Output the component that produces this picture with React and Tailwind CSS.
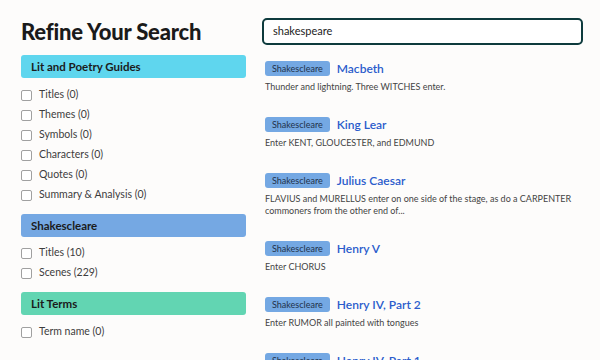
import React from "react";

const font = { fontFamily: "Lato, 'Noto Sans', sans-serif" };

function Check({ label }) {
  return (
    <div className="flex h-[20px] items-center gap-[7px]">
      <span className="block h-[11px] w-[11px] rounded-[2px] border border-[#a0a0a0] bg-white" />
      <span className="text-[10.5px] text-[#3d3d3d]">{label}</span>
    </div>
  );
}

function Bar({ color, children }) {
  return (
    <div className={`flex h-[23px] items-center rounded-[3px] pl-[10px] text-[11.5px] font-bold text-[#1b1b1b] ${color}`}>
      {children}
    </div>
  );
}

function Result({ title, snippet }) {
  return (
    <div className="mb-[24px]">
      <div className="flex h-[15px] items-center">
        <span className="flex h-[15px] items-center rounded-[3px] bg-[#74a8e3] px-[7px] text-[9px] text-[#22324a]">
          Shakescleare
        </span>
        <span className="ml-[7px] text-[12px] font-semibold leading-[15px] text-[#2b5ccc]">{title}</span>
      </div>
      <p className="mt-[5px] text-[9px] leading-[12px] text-[#444]">{snippet}</p>
    </div>
  );
}

export default function App() {
  return (
    <div className="flex h-[360px] w-[600px] overflow-hidden bg-[#fdfcfb] pl-[21px]" style={font}>
      <div className="w-[225px] shrink-0">
        <h1 className="mt-[18px] text-[22px] font-black leading-[28px] tracking-[-0.2px] text-[#1a1a1a]">Refine Your Search</h1>
        <div className="mt-[9px]">
          <Bar color="bg-[#5fd6ee]">Lit and Poetry Guides</Bar>
        </div>
        <div className="mt-[7px] mb-[9px]">
          <Check label="Titles (0)" />
          <Check label="Themes (0)" />
          <Check label="Symbols (0)" />
          <Check label="Characters (0)" />
          <Check label="Quotes (0)" />
          <Check label="Summary & Analysis (0)" />
        </div>
        <Bar color="bg-[#75a8e3]">Shakescleare</Bar>
        <div className="mt-[6px] mb-[9px]">
          <Check label="Titles (10)" />
          <Check label="Scenes (229)" />
        </div>
        <Bar color="bg-[#62d5b2]">Lit Terms</Bar>
        <div className="mt-[7px]">
          <Check label="Term name (0)" />
        </div>
        <p className="mt-[14px] text-center text-[10px] text-[#333]">
          Feedback on our new search? <span className="text-[#2b5ccc]">Tell us</span>
        </p>
      </div>
      <div className="ml-[16px] w-[321px] shrink-0">
        <div className="mt-[18px] flex h-[27px] items-center rounded-[5px] border-2 border-[#0e3b3d] bg-white pl-[9px] text-[11px] text-[#222]">
          shakespeare
        </div>
        <div className="mt-[16px] pl-[3px]">
          <Result title="Macbeth" snippet="Thunder and lightning. Three WITCHES enter." />
          <Result title="King Lear" snippet="Enter KENT, GLOUCESTER, and EDMUND" />
          <Result
            title="Julius Caesar"
            snippet="FLAVIUS and MURELLUS enter on one side of the stage, as do a CARPENTER commoners from the other end of..."
          />
          <Result title="Henry V" snippet="Enter CHORUS" />
          <Result title="Henry IV, Part 2" snippet="Enter RUMOR all painted with tongues" />
          <Result title="Henry IV, Part 1" snippet="" />
        </div>
      </div>
    </div>
  );
}
